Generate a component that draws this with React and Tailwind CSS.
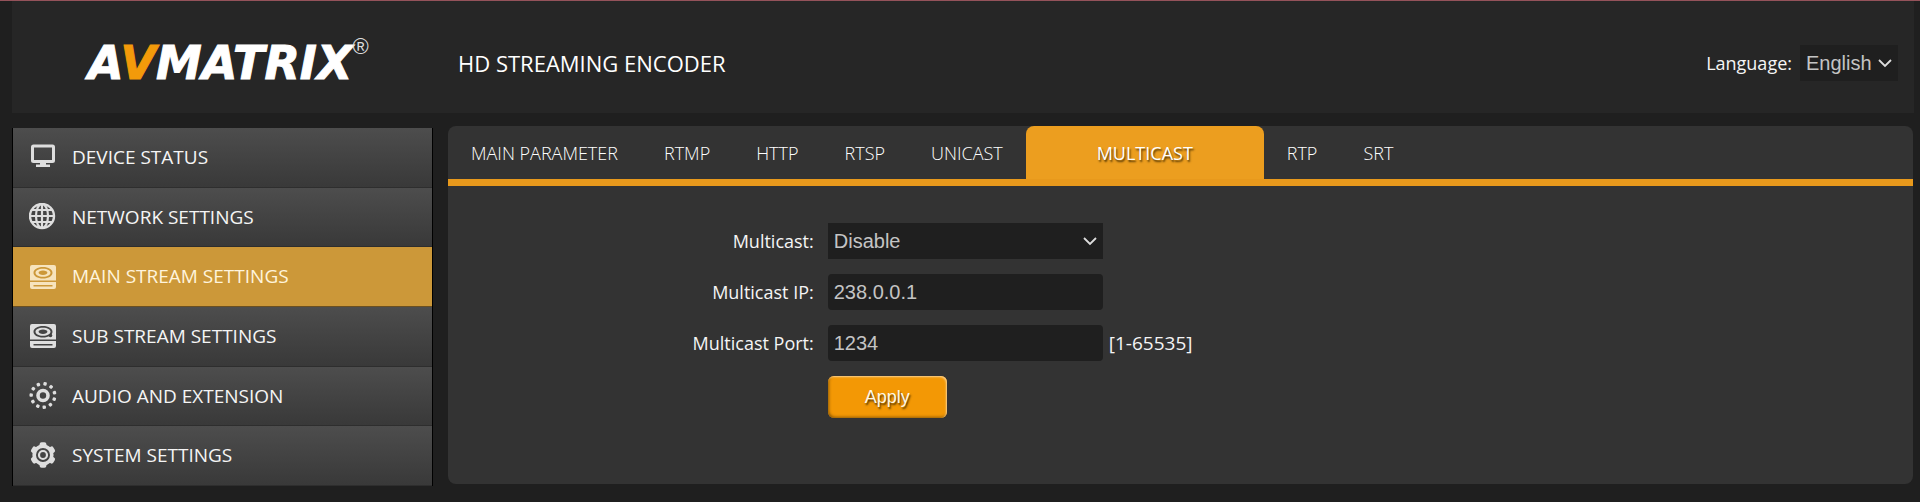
import React, { useState } from "react";

const MonitorIcon = () => (
  <svg viewBox="0 0 28 28" className="w-7 h-7" fill="none">
    <rect x="3.5" y="3" width="21" height="15.500" rx="1" stroke="currentColor" strokeWidth="3" />
    <path d="M11 19h6v2.500h4V24H7v-2.500h4z" fill="currentColor" />
  </svg>
);

const GlobeIcon = () => (
  <svg viewBox="0 0 28 28" className="w-7 h-7" fill="none" stroke="currentColor" strokeWidth="2.200">
    <circle cx="13" cy="13" r="12" strokeWidth="2.400" />
    <ellipse cx="13" cy="13" rx="6" ry="12" />
    <path d="M13 1v24M1 13h24M3 7h20M3 19h20" />
  </svg>
);

const DiskIcon = ({ dot }) => (
  <svg viewBox="0 0 28 28" className="w-7 h-7">
    <path
      fill="currentColor"
      fillRule="evenodd"
      d="M3 2h22a2 2 0 0 1 2 2v13.500H1V4a2 2 0 0 1 2-2zM14 4c-5.500 0-9.500 2.500-9.500 5.800s4 5.800 9.500 5.800 9.500-2.500 9.500-5.800-4-5.800-9.500-5.800zM14 5.800c4.600 0 7.500 1.800 7.500 4s-2.900 4-7.500 4-7.500-1.800-7.500-4 2.900-4 7.500-4zM14 7.600c-2.600 0-4.400 1-4.400 2.200s1.800 2.200 4.400 2.200 4.400-1 4.400-2.200-1.800-2.200-4.400-2.200z"
    />
    {dot && <circle cx="21.500" cy="13.500" r="1.800" className="fill-[#404040]" />}
    <path
      fill="currentColor"
      fillRule="evenodd"
      d="M1 19h26v5a2 2 0 0 1-2 2H3a2 2 0 0 1-2-2zM4.500 22v1.600h19V22z"
    />
  </svg>
);

const DottedGearIcon = () => (
  <svg viewBox="0 0 28 28" className="w-7 h-7">
    <circle cx="14" cy="13.500" r="5" fill="none" stroke="currentColor" strokeWidth="3.600" />
    {[0, 33, 66, 98, 131, 164, 196, 229, 262, 295, 327].map((angle) => (
      <rect
        key={angle}
        x="12.300"
        y="0"
        width="3.400"
        height="3.400"
        rx="1"
        fill="currentColor"
        transform={`rotate(${angle + 10} 14 13.500)`}
      />
    ))}
  </svg>
);

const GearIcon = () => (
  <svg viewBox="0 0 28 28" className="w-7 h-7">
    <g fill="currentColor">
      <path
        fillRule="evenodd"
        d="M14 2.400a10.600 10.600 0 1 0 0 21.200 10.600 10.600 0 0 0 0-21.200zm0 3.600a7 7 0 1 1 0 14 7 7 0 0 1 0-14z"
      />
      {[0, 60, 120, 180, 240, 300].map((angle) => (
        <rect key={angle} x="10.600" y="0.200" width="6.800" height="5" rx="2" transform={`rotate(${angle} 14 13)`} />
      ))}
    </g>
    <circle cx="14" cy="13" r="4" fill="none" stroke="currentColor" strokeWidth="2.200" />
  </svg>
);

const Chevron = () => (
  <svg
    viewBox="0 0 14 14"
    className="w-3.5 h-3.5 absolute right-1.5 top-1/2 -translate-y-1/2 pointer-events-none text-[#dddddd]"
    fill="none"
    stroke="currentColor"
    strokeWidth="1.800"
  >
    <path d="M1 4l6 6 6-6" />
  </svg>
);

const menuItems = [
  { name: "DEVICE STATUS", icon: <MonitorIcon /> },
  { name: "NETWORK SETTINGS", icon: <GlobeIcon /> },
  { name: "MAIN STREAM SETTINGS", icon: <DiskIcon /> },
  { name: "SUB STREAM SETTINGS", icon: <DiskIcon dot /> },
  { name: "AUDIO AND EXTENSION", icon: <DottedGearIcon /> },
  { name: "SYSTEM SETTINGS", icon: <GearIcon /> },
];

const tabs = ["MAIN PARAMETER", "RTMP", "HTTP", "RTSP", "UNICAST", "MULTICAST", "RTP", "SRT"];

const Header = () => (
  <header className="flex items-center h-28 pt-3 pl-[76px] pr-4 bg-[#262626]">
    <div className="w-[370px] flex items-start text-white">
      <span className="font-['DejaVu_Sans'] font-bold italic text-[46px] leading-[52px] [-webkit-text-stroke:1px_currentColor]">
        A<span className="text-[#f39a0a]">V</span>MATRIX
      </span>
      <span className="font-['Liberation_Sans'] text-[22px] leading-5 text-[#dddddd]">®</span>
    </div>
    <h1 className="text-[22px] font-medium text-white">HD STREAMING ENCODER</h1>
    <div className="ml-auto flex items-center gap-2">
      <label htmlFor="language" className="text-lg font-medium text-[#f5f5f5]">
        Language:
      </label>
      <div className="relative">
        <select
          id="language"
          className="appearance-none h-9 pl-1.5 pr-[26px] bg-[#1f1f1f] text-[#c4c4c4] font-['Liberation_Sans'] text-xl leading-6"
        >
          <option>English</option>
        </select>
        <Chevron />
      </div>
    </div>
  </header>
);

const Sidebar = ({ active, onSelect }) => (
  <nav className="w-[421px] shrink-0 mt-0.5 -mb-0.5 flex flex-col border-x border-black">
    {menuItems.map((item) => (
      <a
        key={item.name}
        href="#"
        onClick={() => onSelect(item.name)}
        className={`flex flex-1 items-center gap-[15px] pl-4 text-[19px] font-medium border-b ${
          active === item.name
            ? "bg-[#cc9839] text-[#fff4dc] border-[#6b4f20]"
            : "bg-linear-to-b from-[#4d4d4d] to-[#393939] text-[#f5f5f5] border-[#2e2e2e]"
        }`}
      >
        <span className={active === item.name ? "text-[#f7e4bd]" : "text-[#dedede]"}>{item.icon}</span>
        {item.name}
      </a>
    ))}
  </nav>
);

const fieldStyle = "w-[275px] h-9 px-1.5 bg-[#1f1f1f] text-[#c4c4c4] font-['Liberation_Sans'] text-xl leading-6";

const Field = ({ id, label, hint, children }) => (
  <div className="flex items-center">
    <label htmlFor={id} className="w-1/4 pr-3.5 text-right text-lg font-medium text-[#f5f5f5]">
      {label}
    </label>
    {children}
    {hint && <span className="ml-1.5 text-[19px] text-[#f5f5f5]">{hint}</span>}
  </div>
);

const MulticastForm = () => (
  <form onSubmit={(e) => e.preventDefault()} className="flex flex-col gap-[15px] pl-[18px] pt-[37px] pb-[66px]">
    <Field id="multicast" label="Multicast:">
      <div className="relative">
        <select id="multicast" className={`${fieldStyle} appearance-none`}>
          <option>Disable</option>
          <option>Enable</option>
        </select>
        <Chevron />
      </div>
    </Field>
    <Field id="multicast-ip" label="Multicast IP:">
      <input id="multicast-ip" type="text" defaultValue="238.0.0.1" className={`${fieldStyle} rounded-sm`} />
    </Field>
    <Field id="multicast-port" label="Multicast Port:" hint="[1-65535]">
      <input id="multicast-port" type="text" defaultValue="1234" className={`${fieldStyle} rounded-sm`} />
    </Field>
    <div className="flex">
      <div className="w-1/4" />
      <button
        type="submit"
        className="w-[119px] h-[42px] rounded-md bg-[#f39805] text-[#fff8e6] font-['Liberation_Sans'] text-lg [text-shadow:1px_2px_2px_#4a3000] shadow-[inset_-1px_1px_2px_#ffd591,inset_1px_-1px_3px_#8a5500]"
      >
        Apply
      </button>
    </div>
  </form>
);

const App = () => {
  const [page, setPage] = useState("MAIN STREAM SETTINGS");
  const [tab, setTab] = useState("MULTICAST");

  return (
    <div className="min-h-screen border-t border-[#94525a] bg-[#1f1f1f] pl-3 pr-1.5 font-['Open_Sans',sans-serif]">
      <Header />
      <main className="flex gap-[15px] pt-[13px] pb-4 pr-px">
        <Sidebar active={page} onSelect={setPage} />
        <section className="flex-1 rounded-lg bg-[#333333] overflow-hidden">
          <div className="flex h-[60px] border-b-[7px] border-[#e8991c]">
            {tabs.map((name) => (
              <button
                key={name}
                onClick={() => setTab(name)}
                className={
                  tab === name
                    ? "w-[238px] rounded-t-lg bg-[#ec9e1f] text-lg font-medium text-white [text-shadow:1px_2px_2px_#4a3000]"
                    : "px-[23px] text-lg font-light text-white"
                }
              >
                {name}
              </button>
            ))}
          </div>
          <MulticastForm />
        </section>
      </main>
    </div>
  );
};

export default App;
